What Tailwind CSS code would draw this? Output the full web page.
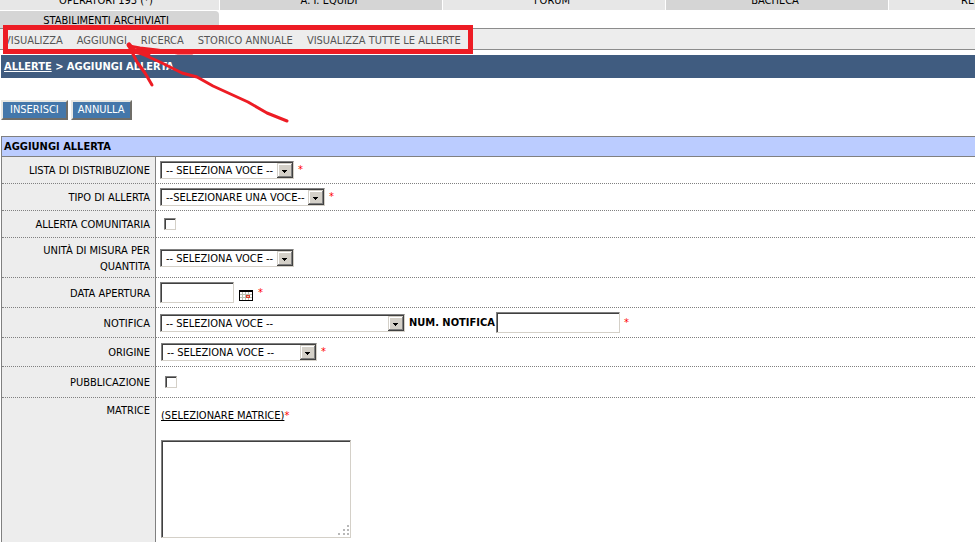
<!DOCTYPE html>
<html lang="it">
<head>
<meta charset="utf-8">
<meta name="viewport" content="width=device-width, initial-scale=1">
<title>Aggiungi allerta</title>
<script src="https://cdn.jsdelivr.net/npm/@tailwindcss/browser@4"></script>
</head>
<body class="relative bg-white font-['DejaVu_Sans_Condensed','DejaVu_Sans',sans-serif] text-[11px] leading-4 text-black overflow-hidden">
<svg class="hidden">
  <defs>
    <g id="arrow" shape-rendering="crispEdges">
      <rect width="16" height="15" fill="#404040"/>
      <rect width="15" height="14" fill="#d4d0c8"/>
      <rect x="1" y="1" width="14" height="13" fill="#808080"/>
      <rect x="1" y="1" width="13" height="12" fill="#fff"/>
      <rect x="2" y="2" width="12" height="11" fill="#d4d0c8"/>
      <path d="M5 7h5v1H5zM6 8h3v1H6zM7 9h1v1H7z" fill="#000"/>
    </g>
  </defs>
</svg>

<nav aria-label="Sezioni">
  <div class="-ml-[3px] flex h-[10px] items-end gap-px overflow-hidden text-center">
    <a href="#" class="w-[222px] flex-none bg-[#e7e7e7] pr-1 pb-px">OPERATORI 193 (*)</a>
    <a href="#" class="w-[222px] flex-none bg-[#d5d5d5] pr-1 pb-px">A. I. EQUIDI</a>
    <a href="#" class="w-[222px] flex-none bg-[#e7e7e7] pr-1 pb-px">FORUM</a>
    <a href="#" class="w-[222px] flex-none bg-[#d5d5d5] pr-1 pb-px">BACHECA</a>
    <a href="#" class="w-[222px] flex-none bg-[#e7e7e7] pb-px pl-[72px] text-left">RELAZIONI</a>
  </div>
  <a href="#" class="-ml-[3px] mt-px block h-[17px] w-[222px] rounded-t-[4px] bg-[#d5d5d5] pt-0.5 pr-1 text-center">STABILIMENTI ARCHIVIATI</a>
</nav>

<nav aria-label="Allerte" class="flex h-[22px] items-center gap-[14px] border-y border-[#8c8c8c] bg-[#ededed] pl-1 pt-1 text-[#555]">
  <a href="#">VISUALIZZA</a>
  <a href="#">AGGIUNGI</a>
  <a href="#">RICERCA</a>
  <a href="#">STORICO ANNUALE</a>
  <a href="#">VISUALIZZA TUTTE LE ALLERTE</a>
</nav>

<main class="ml-px">
  <h1 class="mt-[5px] flex h-[23px] items-center bg-[#405c80] pl-[3px] font-bold text-white"><a href="#" class="underline">ALLERTE</a>&nbsp;&gt; AGGIUNGI ALLERTA</h1>

  <div class="mt-[22px] flex gap-[3px]">
    <button type="submit" form="allerta" class="h-5 border-2 border-t-[#e8e8e4] border-l-[#e8e8e4] border-r-[#6f6d68] border-b-[#6f6d68] bg-[#4477aa] px-[7px] text-white">INSERISCI</button>
    <button type="button" class="h-5 border-2 border-t-[#e8e8e4] border-l-[#e8e8e4] border-r-[#6f6d68] border-b-[#6f6d68] bg-[#4477aa] px-[5px] text-white">ANNULLA</button>
  </div>

  <form id="allerta" class="mt-4">
    <table class="w-full border-separate border-spacing-0 border-t border-l border-[#808080]">
      <thead>
        <tr><th colspan="2" class="h-5 border-b border-[#808080] bg-[#bbccff] p-0 pl-0.5 text-left">AGGIUNGI ALLERTA</th></tr>
      </thead>
      <tbody>
        <tr>
          <th class="h-[27px] w-[154px] border-r border-b border-[#808080] [border-bottom-style:dotted] bg-[#ededed] p-0 pt-0.5 pr-[5px] text-right font-normal"><label for="lista">LISTA DI DISTRIBUZIONE</label></th>
          <td class="border-b border-dotted border-[#808080] p-0 pl-1">
            <div class="flex items-center gap-1">
              <div class="relative w-[134px]"><select id="lista" class="block h-[18px] w-full appearance-none border border-t-[#808080] border-l-[#808080] border-r-[#d4d0c8] border-b-[#d4d0c8] bg-white pt-px pl-[5px] leading-4 shadow-[inset_1px_1px_#404040]"><option>-- SELEZIONA VOCE --</option></select><svg class="pointer-events-none absolute top-0.5 right-px h-[15px] w-4"><use href="#arrow"/></svg></div>
              <span class="text-[#f00]">*</span>
            </div>
          </td>
        </tr>
        <tr>
          <th class="h-[27px] border-r border-b border-[#808080] [border-bottom-style:dotted] bg-[#ededed] p-0 pt-0.5 pr-[5px] text-right font-normal"><label for="tipo">TIPO DI ALLERTA</label></th>
          <td class="border-b border-dotted border-[#808080] p-0 pl-1">
            <div class="flex items-center gap-1">
              <div class="relative w-[165px]"><select id="tipo" class="block h-[18px] w-full appearance-none border border-t-[#808080] border-l-[#808080] border-r-[#d4d0c8] border-b-[#d4d0c8] bg-white pt-px pl-[5px] leading-4 shadow-[inset_1px_1px_#404040]"><option>--SELEZIONARE UNA VOCE--</option></select><svg class="pointer-events-none absolute top-0.5 right-px h-[15px] w-4"><use href="#arrow"/></svg></div>
              <span class="text-[#f00]">*</span>
            </div>
          </td>
        </tr>
        <tr>
          <th class="h-[27px] border-r border-b border-[#808080] [border-bottom-style:dotted] bg-[#ededed] p-0 pt-0.5 pr-[5px] text-right font-normal"><label for="comunitaria">ALLERTA COMUNITARIA</label></th>
          <td class="border-b border-dotted border-[#808080] p-0 pl-2">
            <input type="checkbox" id="comunitaria" class="block size-3 appearance-none border border-t-[#808080] border-l-[#808080] border-r-[#d4d0c8] border-b-[#d4d0c8] bg-white shadow-[inset_1px_1px_#404040]">
          </td>
        </tr>
        <tr>
          <th class="h-10 border-r border-b border-[#808080] [border-bottom-style:dotted] bg-[#ededed] p-0 pt-0.5 pr-[5px] pl-8 text-right font-normal"><label for="unita">UNITÀ DI MISURA PER QUANTITA</label></th>
          <td class="border-b border-dotted border-[#808080] p-0 pl-1">
            <div class="relative w-[134px]"><select id="unita" class="block h-[18px] w-full appearance-none border border-t-[#808080] border-l-[#808080] border-r-[#d4d0c8] border-b-[#d4d0c8] bg-white pt-px pl-[5px] leading-4 shadow-[inset_1px_1px_#404040]"><option>-- SELEZIONA VOCE --</option></select><svg class="pointer-events-none absolute top-0.5 right-px h-[15px] w-4"><use href="#arrow"/></svg></div>
          </td>
        </tr>
        <tr>
          <th class="h-[30px] border-r border-b border-[#808080] [border-bottom-style:dotted] bg-[#ededed] p-0 pt-0.5 pr-[5px] text-right font-normal"><label for="data">DATA APERTURA</label></th>
          <td class="border-b border-dotted border-[#808080] p-0 pl-1">
            <div class="flex items-center gap-[5px]">
              <input type="text" id="data" class="h-[21px] w-[74px] border border-t-[#808080] border-l-[#808080] border-r-[#d4d0c8] border-b-[#d4d0c8] bg-white px-1 shadow-[inset_1px_1px_#404040]">
              <button type="button" aria-label="Calendario" class="pt-[5px]"><svg width="14" height="11" shape-rendering="crispEdges"><rect width="14" height="11" fill="#000"/><rect x="1" y="2" width="12" height="8" fill="#fff"/><path d="M1 4h12v1H1zM1 7h12v1H1zM3 2h1v8H3zM6 2h1v8H6zM9 2h1v8H9z" fill="#b8c0b0"/><path d="M7 5h4v3H7z" fill="#d84030"/><path d="M8 6h2v1H8z" fill="#f0c0a0"/></svg></button>
              <span class="text-[#f00]">*</span>
            </div>
          </td>
        </tr>
        <tr>
          <th class="h-[30px] border-r border-b border-[#808080] [border-bottom-style:dotted] bg-[#ededed] p-0 pt-0.5 pr-[5px] text-right font-normal"><label for="notifica">NOTIFICA</label></th>
          <td class="border-b border-dotted border-[#808080] p-0 pl-1">
            <div class="flex items-center gap-1">
              <div class="relative w-[245px]"><select id="notifica" class="block h-[18px] w-full appearance-none border border-t-[#808080] border-l-[#808080] border-r-[#d4d0c8] border-b-[#d4d0c8] bg-white pt-px pl-[5px] leading-4 shadow-[inset_1px_1px_#404040]"><option>-- SELEZIONA VOCE --</option></select><svg class="pointer-events-none absolute top-0.5 right-px h-[15px] w-4"><use href="#arrow"/></svg></div>
              <label for="numero" class="w-[83px] font-bold whitespace-nowrap">NUM. NOTIFICA</label>
              <input type="text" id="numero" class="h-[21px] w-[124px] border border-t-[#808080] border-l-[#808080] border-r-[#d4d0c8] border-b-[#d4d0c8] bg-white px-1 shadow-[inset_1px_1px_#404040]">
              <span class="text-[#f00]">*</span>
            </div>
          </td>
        </tr>
        <tr>
          <th class="h-[29px] border-r border-b border-[#808080] [border-bottom-style:dotted] bg-[#ededed] p-0 pt-0.5 pr-[5px] text-right font-normal"><label for="origine">ORIGINE</label></th>
          <td class="border-b border-dotted border-[#808080] p-0 pl-[5px]">
            <div class="flex items-center gap-1">
              <div class="relative w-[156px]"><select id="origine" class="block h-[18px] w-full appearance-none border border-t-[#808080] border-l-[#808080] border-r-[#d4d0c8] border-b-[#d4d0c8] bg-white pt-px pl-[5px] leading-4 shadow-[inset_1px_1px_#404040]"><option>-- SELEZIONA VOCE --</option></select><svg class="pointer-events-none absolute top-0.5 right-px h-[15px] w-4"><use href="#arrow"/></svg></div>
              <span class="text-[#f00]">*</span>
            </div>
          </td>
        </tr>
        <tr>
          <th class="h-[31px] border-r border-b border-[#808080] [border-bottom-style:dotted] bg-[#ededed] p-0 pt-0.5 pr-[5px] text-right font-normal"><label for="pubblicazione">PUBBLICAZIONE</label></th>
          <td class="border-b border-dotted border-[#808080] p-0 pl-[9px]">
            <input type="checkbox" id="pubblicazione" class="block size-3 appearance-none border border-t-[#808080] border-l-[#808080] border-r-[#d4d0c8] border-b-[#d4d0c8] bg-white shadow-[inset_1px_1px_#404040]">
          </td>
        </tr>
        <tr>
          <th class="border-r border-[#808080] bg-[#ededed] p-0 pt-[5px] pr-[5px] text-right align-top font-normal"><label for="matrice">MATRICE</label></th>
          <td class="p-0 pt-[10px] pb-4 pl-[5px] align-top">
            <div><a href="#" class="underline">(SELEZIONARE MATRICE)</a><span class="text-[#f00]">*</span></div>
            <div class="relative mt-4 w-[190px]">
              <textarea id="matrice" class="block h-[98px] w-full resize-none border border-t-[#808080] border-l-[#808080] border-r-[#d4d0c8] border-b-[#d4d0c8] bg-white p-1 shadow-[inset_1px_1px_#404040]"></textarea>
              <svg class="pointer-events-none absolute right-0.5 bottom-0.5" width="11" height="11" shape-rendering="crispEdges"><path d="M9 0h2v2H9zM5 4h2v2H5zM9 4h2v2H9zM0 8h2v2H0zM5 8h2v2H5zM9 8h2v2H9z" fill="#b8b8b8"/></svg>
            </div>
          </td>
        </tr>
      </tbody>
    </table>
  </form>
</main>

<div class="pointer-events-none absolute top-[25px] left-[3px] h-[29px] w-[470px] border-[5px] border-[#ed1c24]"></div>
<svg class="pointer-events-none absolute top-[40px] left-[120px]" width="175" height="90" fill="none" stroke="#ed1c24" stroke-width="3" stroke-linecap="round" stroke-linejoin="round">
  <path d="M167 81L147 73 128 62 93 46 77 37 62 33 40 22 13 10 9 5"/>
  <path d="M32 45L25 33 17 22 9 6 20 8 37 10 58 13 72 13"/>
  <path d="M9 5l5 6 14 3" stroke-width="5"/>
</svg>
</body>
</html>
